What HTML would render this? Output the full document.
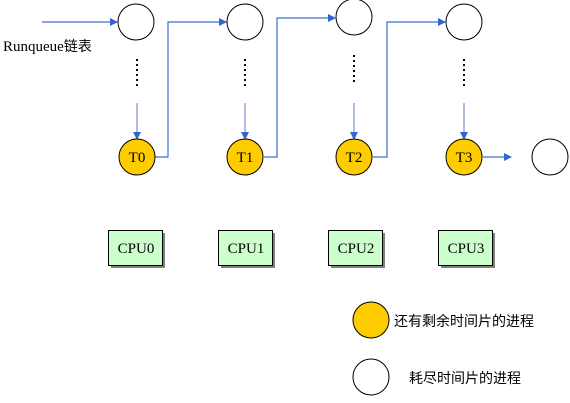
<!DOCTYPE html><html><head><style>body{margin:0;background:#fff}svg{display:block}</style></head><body>
<svg width="570" height="403" viewBox="0 0 570 403" xmlns="http://www.w3.org/2000/svg">
<defs><marker id="a" markerWidth="8" markerHeight="8" refX="7" refY="4" orient="auto" markerUnits="userSpaceOnUse"><path d="M0,0 L8,4 L0,8 z" fill="#3366cc"/></marker></defs>
<g fill="none" stroke="#3a6fd0" stroke-width="1.2">
<line x1="42" y1="22" x2="117" y2="22" marker-end="url(#a)"/>
<polyline points="155,157 168,157 168,22 226,22" marker-end="url(#a)"/>
<polyline points="264,157 277,157 277,18 335,18" marker-end="url(#a)"/>
<polyline points="373,157 387,157 387,22 445,22" marker-end="url(#a)"/>
<line x1="483" y1="157" x2="511" y2="157" marker-end="url(#a)"/>
<g stroke="#7f8fc8"><line x1="137" y1="103" x2="137" y2="139" marker-end="url(#a)"/><line x1="245" y1="103" x2="245" y2="139" marker-end="url(#a)"/><line x1="354" y1="103" x2="354" y2="139" marker-end="url(#a)"/><line x1="464" y1="103" x2="464" y2="139" marker-end="url(#a)"/></g>
</g>
<g stroke="#000" stroke-width="2" stroke-dasharray="2,3"><line x1="137" y1="59" x2="137" y2="88"/><line x1="245" y1="59" x2="245" y2="88"/><line x1="354" y1="55" x2="354" y2="84"/><line x1="464" y1="59" x2="464" y2="88"/></g>
<g stroke="#000" fill="#fff"><circle cx="136" cy="22" r="18"/><circle cx="245" cy="22" r="18"/><circle cx="354" cy="17" r="18"/><circle cx="464" cy="22" r="18"/><circle cx="550" cy="157" r="18"/><circle cx="371" cy="377" r="18"/></g>
<g stroke="#000" fill="#ffcc00"><circle cx="137" cy="157" r="18"/><circle cx="245" cy="157" r="18"/><circle cx="354" cy="157" r="18"/><circle cx="464" cy="157" r="18"/><circle cx="371" cy="320" r="18"/></g>
<g font-family="Liberation Serif,serif" font-size="15" text-anchor="middle" fill="#000"><text x="137" y="162">T0</text><text x="245" y="162">T1</text><text x="354" y="162">T2</text><text x="464" y="162">T3</text></g>
<g fill="#808080"><rect x="111" y="233" width="54" height="35"/><rect x="221" y="233" width="54" height="35"/><rect x="331" y="233" width="54" height="35"/><rect x="441" y="233" width="54" height="35"/></g>
<g fill="#ccffcc" stroke="#000"><rect x="108.5" y="230.5" width="54" height="35"/><rect x="218.5" y="230.5" width="54" height="35"/><rect x="328.5" y="230.5" width="54" height="35"/><rect x="438.5" y="230.5" width="54" height="35"/></g>
<g font-family="Liberation Serif,serif" font-size="15" text-anchor="middle"><text x="136" y="253">CPU0</text><text x="246" y="253">CPU1</text><text x="356" y="253">CPU2</text><text x="466" y="253">CPU3</text></g>
<text x="3" y="51" font-family="Liberation Serif,'Noto Serif CJK SC',serif" font-size="15">Runqueue<tspan font-family="'Noto Sans CJK SC',sans-serif" font-size="14">链表</tspan></text>
<g font-family="'Noto Sans CJK SC',sans-serif" font-size="14" fill="#000"><text x="394" y="326">还有剩余时间片的进程</text><text x="409" y="383">耗尽时间片的进程</text></g>
</svg></body></html>
